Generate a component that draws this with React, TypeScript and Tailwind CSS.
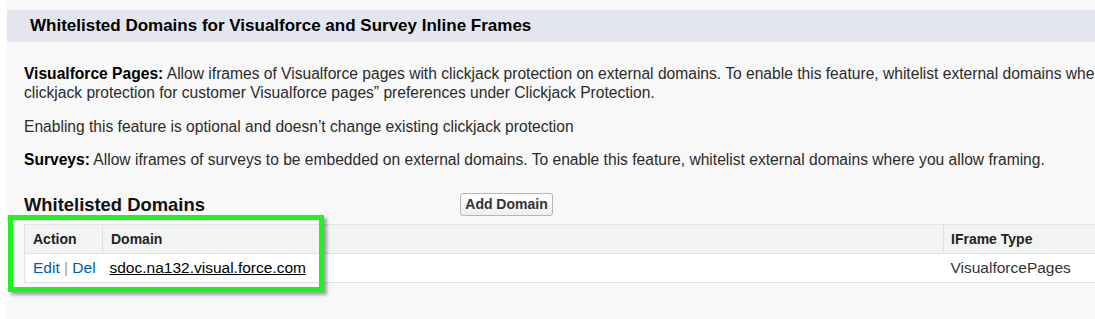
import React from "react";

const font = { fontFamily: '"Liberation Sans", Arial, sans-serif' };

const App = () => {
  return (
    <div className="w-[1095px] h-[319px] overflow-hidden bg-white flex" style={font}>
      <div className="w-[7px] shrink-0 bg-white" />
      <div className="flex-1 min-w-0 bg-[#f8f8f8] pt-[10px] flex flex-col">
        <div className="h-[32px] bg-[#e3e6ef] flex items-center pl-[23px]">
          <h2 className="text-[17px] font-bold text-black whitespace-nowrap">
            Whitelisted Domains for Visualforce and Survey Inline Frames
          </h2>
        </div>

        <div className="pl-[17px] pt-[22px] text-[15.6px] leading-[19px] text-[#2b2b2b] whitespace-nowrap overflow-hidden">
          <p>
            <b className="text-black">Visualforce Pages:</b> Allow iframes of Visualforce pages with clickjack protection on external domains. To enable this feature, whitelist external domains where you allow framing
          </p>
          <p>clickjack protection for customer Visualforce pages” preferences under Clickjack Protection.</p>
          <p className="mt-[15px]">Enabling this feature is optional and doesn’t change existing clickjack protection</p>
          <p className="mt-[14px]">
            <b className="text-black">Surveys:</b> Allow iframes of surveys to be embedded on external domains. To enable this feature, whitelist external domains where you allow framing.
          </p>
        </div>

        <div className="pl-[17px] mt-[24px] flex items-center h-[23px]">
          <h3 className="w-[436px] text-[18.4px] font-bold text-[#111] whitespace-nowrap">Whitelisted Domains</h3>
          <button className="h-[23px] w-[93px] rounded-[3px] border border-[#b5b5b5] bg-gradient-to-b from-white to-[#efefef] text-[14px] font-bold text-[#333]">
            Add Domain
          </button>
        </div>

        <div className="relative ml-[17px] mt-[8px]">
          <table className="w-full border-collapse text-[15.5px]">
            <thead>
              <tr className="h-[29px] bg-[#f2f3f3] border-t border-b border-[#dfe2e4]">
                <th className="w-[78px] text-left pl-[8px] text-[14px] font-bold text-[#222] border-r border-l border-[#dfe2e4]">Action</th>
                <th className="w-[841px] text-left pl-[8px] text-[14px] font-bold text-[#222] border-r border-[#dfe2e4]">Domain</th>
                <th className="text-left pl-[7px] text-[14px] font-bold text-[#222]">IFrame Type</th>
              </tr>
            </thead>
            <tbody>
              <tr className="h-[29px] bg-white border-b border-[#dfe2e4]">
                <td className="pl-[8px] border-l border-[#dfe2e4] whitespace-nowrap">
                  <a className="text-[#015ba7]">Edit</a>
                  <span className="text-[#999]"> | </span>
                  <a className="text-[#015ba7]">Del</a>
                </td>
                <td className="pl-[7px]">
                  <a className="underline text-black">sdoc.na132.visual.force.com</a>
                </td>
                <td className="pl-[7px] text-[#333] whitespace-nowrap">VisualforcePages</td>
              </tr>
            </tbody>
          </table>
          <div className="absolute left-[-16px] top-[-9px] w-[316px] h-[77px] border-[5px] border-[#1cf51c] shadow-[3px_3px_3px_rgba(0,0,0,0.35)] pointer-events-none" />
        </div>
      </div>
    </div>
  );
};

export default App;
